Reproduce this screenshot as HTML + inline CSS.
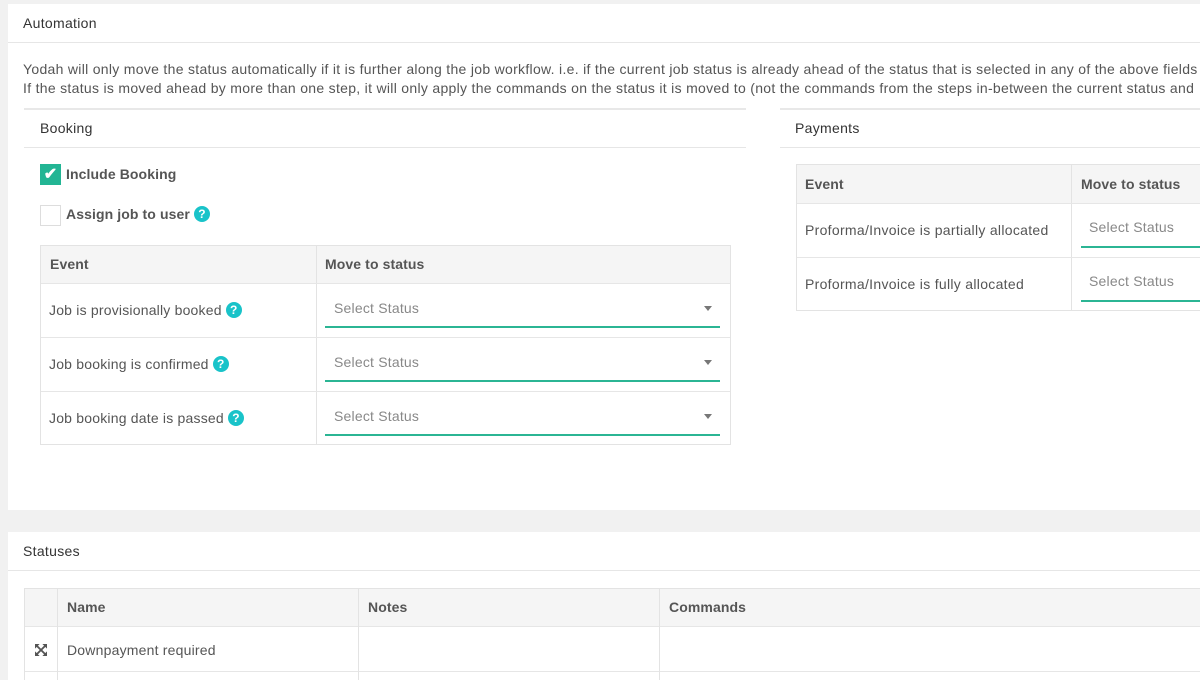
<!DOCTYPE html>
<html><head><style>
*{box-sizing:border-box;margin:0;padding:0}
html,body{width:1200px;height:680px;overflow:hidden}
body{background:#f1f1f1;font-family:"Liberation Sans",Arial,sans-serif;font-size:14px;color:#555;position:relative}
.a{position:absolute}
.panel{position:absolute;background:#fff;left:8px;width:1192px}
.hline{position:absolute;height:1px;background:#e6e6e6}
.t{position:absolute;white-space:nowrap;line-height:18px;letter-spacing:0.2px}
.h{color:#333;font-size:14px;letter-spacing:0.3px}
.b{font-weight:bold;color:#555;letter-spacing:0.1px}
.tbl{position:absolute;border:1px solid #e3e3e3}
.q{display:inline-block;width:16px;height:16px;border-radius:50%;background:#19c3c9;color:#fff;font-weight:bold;font-size:12px;line-height:16px;text-align:center;position:relative;top:0;margin-left:4px;vertical-align:top;margin-top:1px;letter-spacing:0}
.sel{position:absolute;height:2px;background:#2bb594}
.ph{color:#888;letter-spacing:0.2px}
.arr{position:absolute;width:0;height:0;border-left:4px solid transparent;border-right:4px solid transparent;border-top:5px solid #777}
</style></head><body>
<div class="panel" style="top:4px;height:506px"></div>
<div class="t h" style="left:23px;top:14px">Automation</div>
<div class="hline" style="left:8px;top:42px;width:1192px"></div>
<div class="t" style="left:23px;top:60px;letter-spacing:0.3px">Yodah will only move the status automatically if it is further along the job workflow. i.e. if the current job status is already ahead of the status that is selected in any of the above fields</div>
<div class="t" style="left:23px;top:79px;letter-spacing:0.3px">If the status is moved ahead by more than one step, it will only apply the commands on the status it is moved to (not the commands from the steps in-between the current status and</div>

<div class="hline" style="left:24px;top:108px;width:722px;background:#e8e8e8;height:2px"></div>
<div class="t h" style="left:40px;top:119px">Booking</div>
<div class="hline" style="left:24px;top:147px;width:722px"></div>
<div class="a" style="left:40px;top:164px;width:21px;height:21px;background:#22b594;color:#fff;font-size:16px;line-height:21px;text-align:center;font-weight:bold">✔</div>
<div class="t b" style="left:66px;top:165px">Include Booking</div>
<div class="a" style="left:40px;top:205px;width:21px;height:21px;border:1px solid #ddd"></div>
<div class="t b" style="left:66px;top:205px">Assign job to user<span class="q">?</span></div>

<div class="tbl" style="left:40px;top:245px;width:691px;height:200px"></div>
<div class="a" style="left:41px;top:246px;width:689px;height:37px;background:#f5f5f5"></div>
<div class="a" style="left:316px;top:246px;width:1px;height:198px;background:#e3e3e3"></div>
<div class="hline" style="left:41px;top:283px;width:689px"></div>
<div class="hline" style="left:41px;top:337px;width:689px"></div>
<div class="hline" style="left:41px;top:391px;width:689px"></div>
<div class="t b" style="left:50px;top:255px">Event</div>
<div class="t b" style="left:325px;top:255px">Move to status</div>
<div class="t" style="left:49px;top:301px">Job is provisionally booked<span class="q">?</span></div>
<div class="t" style="left:49px;top:355px">Job booking is confirmed<span class="q">?</span></div>
<div class="t" style="left:49px;top:409px">Job booking date is passed<span class="q">?</span></div>
<div class="t ph" style="left:334px;top:299px">Select Status</div>
<div class="t ph" style="left:334px;top:353px">Select Status</div>
<div class="t ph" style="left:334px;top:407px">Select Status</div>
<div class="arr" style="left:704px;top:306px"></div>
<div class="arr" style="left:704px;top:360px"></div>
<div class="arr" style="left:704px;top:414px"></div>
<div class="sel" style="left:325px;top:326px;width:395px"></div>
<div class="sel" style="left:325px;top:380px;width:395px"></div>
<div class="sel" style="left:325px;top:434px;width:395px"></div>

<div class="hline" style="left:780px;top:108px;width:420px;background:#e8e8e8;height:2px"></div>
<div class="t h" style="left:795px;top:119px">Payments</div>
<div class="hline" style="left:780px;top:147px;width:420px"></div>
<div class="tbl" style="left:796px;top:164px;width:420px;height:147px"></div>
<div class="a" style="left:797px;top:165px;width:410px;height:38px;background:#f5f5f5"></div>
<div class="a" style="left:1071px;top:165px;width:1px;height:145px;background:#e3e3e3"></div>
<div class="hline" style="left:797px;top:203px;width:410px"></div>
<div class="hline" style="left:797px;top:257px;width:410px"></div>
<div class="t b" style="left:805px;top:175px">Event</div>
<div class="t b" style="left:1081px;top:175px">Move to status</div>
<div class="t" style="left:805px;top:221px;letter-spacing:0.3px">Proforma/Invoice is partially allocated</div>
<div class="t" style="left:805px;top:275px;letter-spacing:0.3px">Proforma/Invoice is fully allocated</div>
<div class="t ph" style="left:1089px;top:218px">Select Status</div>
<div class="t ph" style="left:1089px;top:272px">Select Status</div>
<div class="sel" style="left:1081px;top:246px;width:130px"></div>
<div class="sel" style="left:1081px;top:300px;width:130px"></div>

<div class="panel" style="top:532px;height:160px"></div>
<div class="t h" style="left:23px;top:542px">Statuses</div>
<div class="hline" style="left:8px;top:570px;width:1192px"></div>
<div class="tbl" style="left:24px;top:588px;width:1200px;height:100px"></div>
<div class="a" style="left:25px;top:589px;width:1180px;height:37px;background:#f5f5f5"></div>
<div class="hline" style="left:25px;top:626px;width:1180px"></div>
<div class="hline" style="left:25px;top:671px;width:1180px"></div>
<div class="a" style="left:57px;top:589px;width:1px;height:100px;background:#e3e3e3"></div>
<div class="a" style="left:358px;top:589px;width:1px;height:100px;background:#e3e3e3"></div>
<div class="a" style="left:659px;top:589px;width:1px;height:100px;background:#e3e3e3"></div>
<div class="t b" style="left:67px;top:598px">Name</div>
<div class="t b" style="left:368px;top:598px">Notes</div>
<div class="t b" style="left:669px;top:598px">Commands</div>
<svg class="a" style="left:35px;top:644px" width="12" height="12" viewBox="0 0 13 13"><g stroke="#555" stroke-width="2" fill="none"><path d="M2 2L11 11M11 2L2 11"/></g><g fill="#555"><path d="M0 0h5l-5 5zM13 0v5l-5-5zM0 13v-5l5 5zM13 13h-5l5-5z"/></g></svg>
<div class="t" style="left:67px;top:641px">Downpayment required</div>
</body></html>
